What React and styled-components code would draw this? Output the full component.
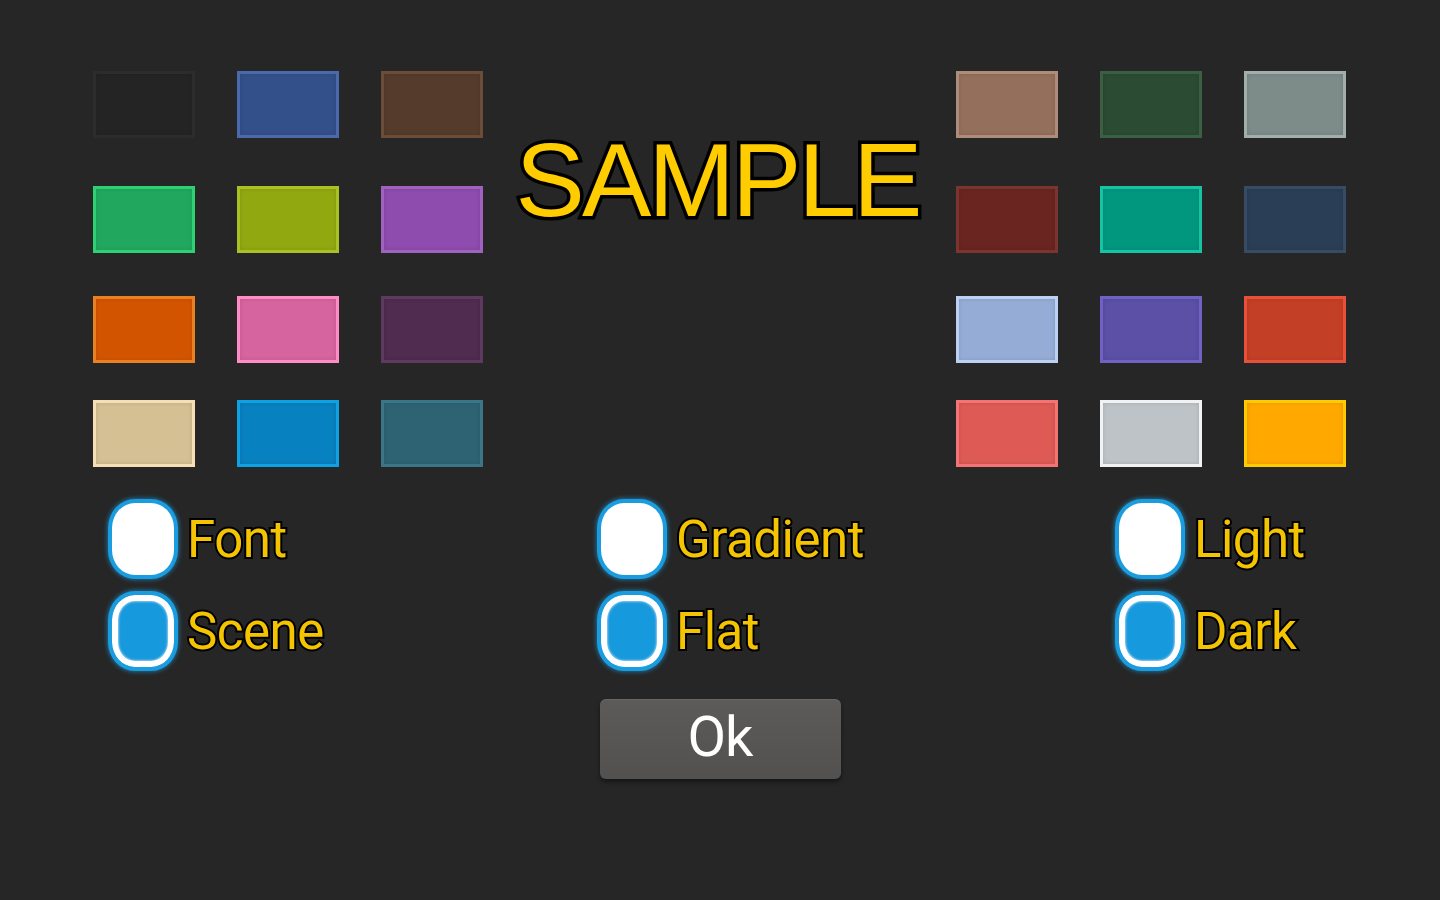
import React from "react";
import styled, { createGlobalStyle } from "styled-components";

const Global = createGlobalStyle`
  html, body { margin: 0; padding: 0; background: #262626; }
  body { width: 1440px; height: 900px; overflow: hidden; font-family: Roboto, "Liberation Sans", sans-serif; }
`;

const Page = styled.div`
  width: 1440px;
  height: 900px;
  box-sizing: border-box;
  padding: 71px 93px 0 93px;
  display: flex;
  flex-direction: column;
  background: #262626;
`;

const Top = styled.div`
  display: grid;
  grid-template-columns: 390px 1fr 391px;
`;

const SwatchGrid = styled.div`
  display: grid;
  grid-template-columns: repeat(3, 102px);
  grid-template-rows: 115px 110px 104px 67px;
  column-gap: 42px;
  align-items: start;
`;

const Swatch = styled.div`
  width: 102px;
  height: 67px;
  box-sizing: border-box;
  background: ${(p) => p.$fill};
  border: 3px solid ${(p) => p.$edge};
  box-shadow: inset 0 0 4px rgba(0, 0, 0, 0.12);
`;

const Center = styled.div`
  display: flex;
  justify-content: center;
  padding-top: 57px;
`;

const Sample = styled.div`
  font-family: "Liberation Sans", Arial, sans-serif;
  font-size: 104px;
  line-height: 1;
  letter-spacing: -3px;
  color: #ffcc00;
  -webkit-text-stroke: 7px #000;
  paint-order: stroke fill;
  margin-right: 4px;
`;

const Options = styled.div`
  display: grid;
  grid-template-columns: 489px 518px auto;
  padding-left: 15px;
  margin-top: 30px;
`;

const OptionCol = styled.div`
  display: flex;
  flex-direction: column;
  gap: 8px;
`;

const OptionRow = styled.label`
  display: flex;
  align-items: center;
  gap: 9px;
  height: 84px;
`;

const Radio = styled.span`
  box-sizing: border-box;
  width: 70px;
  height: 80px;
  border-radius: 27px / 29px;
  border: 4px solid #1a9de0;
  box-shadow: 0 0 4px 1px rgba(26, 157, 224, 0.6);
  background: ${(p) => (p.$on ? "#1799dd" : "#ffffff")};
  ${(p) =>
    p.$on
      ? `box-shadow: inset 0 0 0 6px #ffffff, inset 0 0 2px 7px rgba(255,255,255,0.5), 0 0 4px 1px rgba(26,157,224,0.6);`
      : ""}
`;

const Label = styled.span`
  font-family: Roboto, "Liberation Sans", sans-serif;
  font-size: 51px;
  line-height: 1;
  color: #f5c400;
  -webkit-text-stroke: 4px #000;
  paint-order: stroke fill;
  letter-spacing: -0.5px;
`;

const ButtonRow = styled.div`
  display: flex;
  justify-content: center;
  margin-top: 26px;
`;

const OkButton = styled.button`
  width: 241px;
  height: 80px;
  border: none;
  border-radius: 6px;
  background: linear-gradient(#5d5a5a, #535050);
  box-shadow: 0 3px 4px rgba(0, 0, 0, 0.45), inset 0 1px 0 rgba(255, 255, 255, 0.08);
  color: #ffffff;
  font-family: Roboto, "Liberation Sans", sans-serif;
  font-size: 56px;
  line-height: 1;
  letter-spacing: -1px;
  padding: 0 0 4px;
  cursor: pointer;
`;

const left = [
  ["#242424", "#2c2c2c"], ["#34508a", "#4a6aab"], ["#553b2b", "#6b4c37"],
  ["#21a85e", "#2ed074"], ["#92a811", "#a9c222"], ["#8e4cae", "#a062c0"],
  ["#d35400", "#ea8020"], ["#d6649e", "#ff8cc4"], ["#502c50", "#5e3a60"],
  ["#d5c094", "#f4e0b4"], ["#0881c0", "#0ca2e4"], ["#2e6374", "#3a7687"],
];

const right = [
  ["#94705c", "#ae8c7a"], ["#2c4b33", "#3a5f43"], ["#7d8b89", "#a2aeac"],
  ["#6a2520", "#7c342f"], ["#01977f", "#14c4a2"], ["#2a3e55", "#354c64"],
  ["#95add6", "#bcd0f4"], ["#5b4fa6", "#7062c4"], ["#c33f25", "#e8503a"],
  ["#de5a55", "#f47474"], ["#bdc3c7", "#f0f2f3"], ["#ffa800", "#ffcc00"],
];

const groups = [
  [["Font", false], ["Scene", true]],
  [["Gradient", false], ["Flat", true]],
  [["Light", false], ["Dark", true]],
];

function Grid({ colors }) {
  return (
    <SwatchGrid>
      {colors.map(([f, e], i) => (
        <Swatch key={i} $fill={f} $edge={e} />
      ))}
    </SwatchGrid>
  );
}

export default function App() {
  return (
    <>
      <Global />
      <Page>
        <Top>
          <Grid colors={left} />
          <Center>
            <Sample>SAMPLE</Sample>
          </Center>
          <Grid colors={right} />
        </Top>
        <Options>
          {groups.map((g, gi) => (
            <OptionCol key={gi}>
              {g.map(([t, on]) => (
                <OptionRow key={t}>
                  <Radio $on={on} />
                  <Label>{t}</Label>
                </OptionRow>
              ))}
            </OptionCol>
          ))}
        </Options>
        <ButtonRow>
          <OkButton>Ok</OkButton>
        </ButtonRow>
      </Page>
    </>
  );
}
